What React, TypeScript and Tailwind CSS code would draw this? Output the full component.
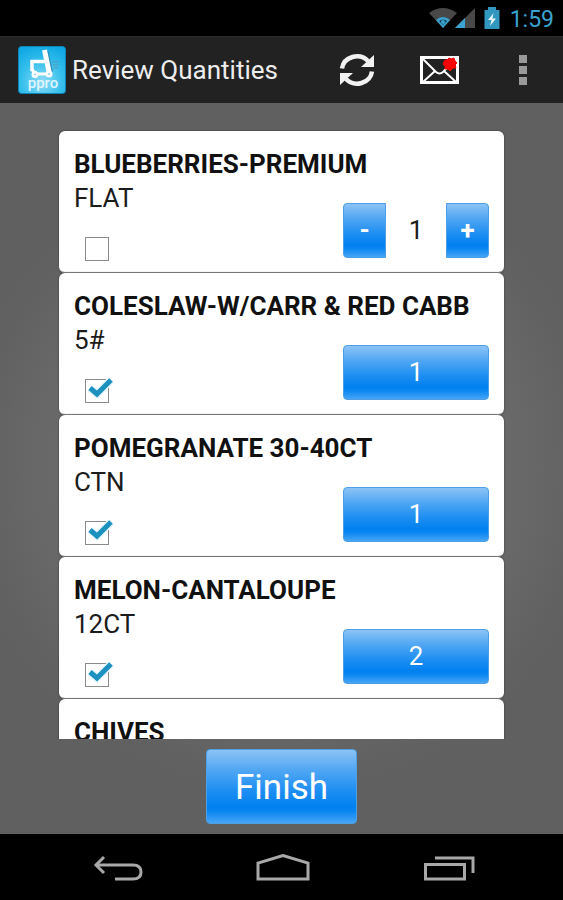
import { useState } from "react";

interface Item {
  id: number;
  name: string;
  unit: string;
  quantity: number;
  checked: boolean;
}

const initialItems: Item[] = [
  { id: 1, name: "BLUEBERRIES-PREMIUM", unit: "FLAT", quantity: 1, checked: false },
  { id: 2, name: "COLESLAW-W/CARR & RED CABB", unit: "5#", quantity: 1, checked: true },
  { id: 3, name: "POMEGRANATE 30-40CT", unit: "CTN", quantity: 1, checked: true },
  { id: 4, name: "MELON-CANTALOUPE", unit: "12CT", quantity: 2, checked: true },
  { id: 5, name: "CHIVES", unit: "", quantity: 1, checked: true },
];

const blueFill =
  "border border-[#4d9fe6] bg-[linear-gradient(#8cc3f5_0%,#4fa6f3_28%,#1f8ff2_55%,#0080f0_78%,#0a86f2_84%,#47a5f5_100%)] text-white";

const StatusBar = () => (
  <div className="flex h-9 shrink-0 items-center justify-end bg-black pr-[9px] text-[#3aa3cf]">
    <svg width="30" height="22" viewBox="0 0 30 22" aria-hidden="true">
      <path d="M1 6 Q15 -4 29 6 L15 21 Z" fill="#484848" />
      <path d="M8 13 Q15 7 22 13 L15 21 Z" fill="#3aa3cf" />
      <path d="M11 14 Q15 11 19 14 L15 18 Z" fill="#123a4b" />
      <circle cx="15" cy="15" r="2" fill="#3aa3cf" />
    </svg>
    <svg className="-ml-1" width="22" height="22" viewBox="0 0 22 22" aria-hidden="true">
      <path d="M21 1 V21 H1 Z" fill="#484848" />
      <path d="M11 11 V21 H1 Z" fill="#3aa3cf" />
    </svg>
    <svg className="ml-2" width="16" height="24" viewBox="0 0 16 24" aria-hidden="true">
      <path d="M4 1 H12 V4 H15.500 V23 H0.500 V4 H4 Z" fill="#3297bf" />
      <path d="M9.500 7 L4 14 H7.500 L6 20 L12 12.500 H8.500 Z" fill="#e4f6fc" />
    </svg>
    <span className="ml-[10px] pt-1 text-[23px] leading-8">1:59</span>
  </div>
);

const AppLogo = () => (
  <svg className="shrink-0" width="48" height="48" viewBox="0 0 48 48" role="img" aria-label="ppro">
    <defs>
      <radialGradient id="logo" cx="0.5" cy="0.75" r="0.8">
        <stop offset="0" stopColor="#8fdcf6" />
        <stop offset="0.55" stopColor="#35bfec" />
        <stop offset="1" stopColor="#0fa8e4" />
      </radialGradient>
    </defs>
    <rect x="0.500" y="0.500" width="47" height="47" rx="3" fill="url(#logo)" stroke="#0d84b5" />
    <path d="M34 16 H41 M34 19 H41 M35 22 H40" stroke="#5b9ab5" strokeWidth="1" />
    <path d="M29.500 5 L34 26" stroke="#2b93bd" strokeWidth="2" />
    <path d="M26.500 4 L31.500 28" stroke="#fff" strokeWidth="5" />
    <path d="M14 25 V15.500 H27" stroke="#fff" strokeWidth="3.500" fill="none" />
    <path d="M14 24 L19 28 M17 28 H31" stroke="#fff" strokeWidth="3" />
    <circle cx="17" cy="28.500" r="3.500" fill="#fff" />
    <circle cx="31" cy="28" r="3.500" fill="#fff" />
    <circle cx="17" cy="28.500" r="1" fill="#8fd0ea" />
    <circle cx="31" cy="28" r="1" fill="#8fd0ea" />
    <text
      x="25"
      y="42"
      textAnchor="middle"
      fill="#dff5fc"
      fontFamily="Roboto, sans-serif"
      fontSize="15"
      fontWeight="500"
    >
      ppro
    </text>
  </svg>
);

const Header = () => (
  <header className="flex h-[67px] shrink-0 items-center border-t border-[#2c2c2c] bg-[#222222] pl-[18px] pr-8">
    <AppLogo />
    <h1 className="ml-[6px] flex-1 whitespace-nowrap text-[26px] leading-8 text-[#ededed]">
      Review Quantities
    </h1>
    <button type="button" aria-label="Refresh" className="shrink-0">
      <svg width="38" height="36" viewBox="0 0 38 36" fill="none">
        <path d="M4 16.500 A15 14 0 0 1 30 9" stroke="#f2f2f2" strokeWidth="4.500" />
        <path d="M36 3 V15 H23 Z" fill="#f2f2f2" />
        <path d="M34 19.500 A15 14 0 0 1 8 27" stroke="#f2f2f2" strokeWidth="4.500" />
        <path d="M2 33 V21 H15 Z" fill="#f2f2f2" />
      </svg>
    </button>
    <button type="button" aria-label="Messages" className="ml-11 shrink-0">
      <svg width="39" height="30" viewBox="0 0 39 30" fill="none">
        <rect x="1.500" y="2.500" width="36" height="25" stroke="#fff" strokeWidth="3" />
        <path d="M3 4 L16 17 Q19.500 20 23 17 L36 4 M3 27 L15 16 M36 27 L24 16" stroke="#fff" strokeWidth="2" />
        <path
          d="M25 5 L27 5 L29 3 L31 4 L34 3 L35 6 L37 8 L35 10 L36 13 L33 13 L30 16 L28 14 L25 14 L25 11 L23 9 Z"
          fill="#f50505"
          stroke="#f50505"
        />
      </svg>
    </button>
    <button type="button" aria-label="More options" className="ml-14 flex shrink-0 flex-col gap-[3px] px-1">
      <span className="size-2 bg-[#999999]" />
      <span className="size-2 bg-[#999999]" />
      <span className="size-2 bg-[#999999]" />
    </button>
  </header>
);

interface ItemCardProps {
  item: Item;
  onToggle: () => void;
  onChange: (quantity: number) => void;
}

const ItemCard = ({ item, onToggle, onChange }: ItemCardProps) => (
  <li className="flex h-[142px] flex-col rounded-md border-b border-[#8f8f8f] bg-white px-[15px] pb-[14px] pt-4 shadow-[0_0_2px_#333333]">
    <h2 className="whitespace-nowrap text-[26px] font-bold leading-[34px] text-[#111111]">{item.name}</h2>
    <div className="flex flex-1 justify-between">
      <div className="flex flex-col justify-between">
        <p className="text-[26px] leading-[34px] text-[#1c1c1c]">{item.unit}</p>
        <label className="relative mb-[-3px] ml-[11px] block size-6">
          <input
            type="checkbox"
            aria-label={item.name}
            checked={item.checked}
            onChange={onToggle}
            className="peer block size-6 appearance-none border border-[#8a8a8a] bg-white"
          />
          <svg
            className="pointer-events-none absolute -top-1 left-0 hidden peer-checked:block"
            width="30"
            height="24"
            viewBox="0 0 30 24"
            fill="none"
          >
            <path d="M5 13 L12 19 L26 5" stroke="#e6f6fc" strokeWidth="8" />
            <path d="M5 13 L12 19 L26 5" stroke="#1c91bf" strokeWidth="5" />
          </svg>
        </label>
      </div>
      {item.checked ? (
        <button
          type="button"
          onClick={onToggle}
          className={`h-[55px] w-[146px] self-end rounded text-[26px] ${blueFill}`}
        >
          {item.quantity}
        </button>
      ) : (
        <div className="flex h-[55px] w-[146px] items-stretch self-end">
          <button
            type="button"
            aria-label="Decrease"
            onClick={() => onChange(Math.max(0, item.quantity - 1))}
            className={`w-[43px] rounded-l text-[26px] font-bold ${blueFill}`}
          >
            -
          </button>
          <span className="flex flex-1 items-center justify-center text-[26px] text-[#1c1c1c]">
            {item.quantity}
          </span>
          <button
            type="button"
            aria-label="Increase"
            onClick={() => onChange(item.quantity + 1)}
            className={`w-[43px] rounded-r text-[26px] font-bold ${blueFill}`}
          >
            +
          </button>
        </div>
      )}
    </div>
  </li>
);

const NavBar = () => (
  <nav className="flex h-[66px] shrink-0 items-center justify-around bg-black pl-9 pr-8 pt-1 text-[#a8a8a8]">
    <button type="button" aria-label="Back">
      <svg width="50" height="30" viewBox="0 0 50 30" fill="none" stroke="currentColor" strokeWidth="3">
        <path d="M3 11 H40 Q48 11 48 18 Q48 25 40 25 H22" />
        <path d="M11 3 L3 11 L11 19" />
      </svg>
    </button>
    <button type="button" aria-label="Home">
      <svg width="54" height="30" viewBox="0 0 54 30" fill="none" stroke="currentColor" strokeWidth="3">
        <path d="M2 25 V9 L27 1.500 L52 9 V25 Z" />
      </svg>
    </button>
    <button type="button" aria-label="Recent apps">
      <svg width="52" height="30" viewBox="0 0 52 30" fill="none" stroke="currentColor" strokeWidth="3">
        <rect x="2.500" y="10.500" width="39" height="14.500" />
        <path d="M12 4 H50 V19" />
      </svg>
    </button>
  </nav>
);

const App = () => {
  const [items, setItems] = useState<Item[]>(initialItems);

  const updateItem = (id: number, changes: Partial<Item>) => {
    setItems(items.map((item) => (item.id === id ? { ...item, ...changes } : item)));
  };

  return (
    <div className="flex h-screen flex-col overflow-hidden bg-black font-[Roboto,sans-serif]">
      <StatusBar />
      <Header />
      <main className="flex min-h-0 flex-1 flex-col items-center bg-[radial-gradient(circle_at_center,#808080_0%,#606060_320px)] pb-[10px] pt-6">
        <ul className="min-h-0 w-full flex-1 overflow-hidden px-[59px] pt-1">
          {items.map((item) => (
            <ItemCard
              key={item.id}
              item={item}
              onToggle={() => updateItem(item.id, { checked: !item.checked })}
              onChange={(quantity) => updateItem(item.id, { quantity })}
            />
          ))}
        </ul>
        <button type="button" className={`mt-[10px] h-[75px] shrink-0 rounded px-7 pt-1 text-[35px] ${blueFill}`}>
          Finish
        </button>
      </main>
      <NavBar />
    </div>
  );
};

export default App;
